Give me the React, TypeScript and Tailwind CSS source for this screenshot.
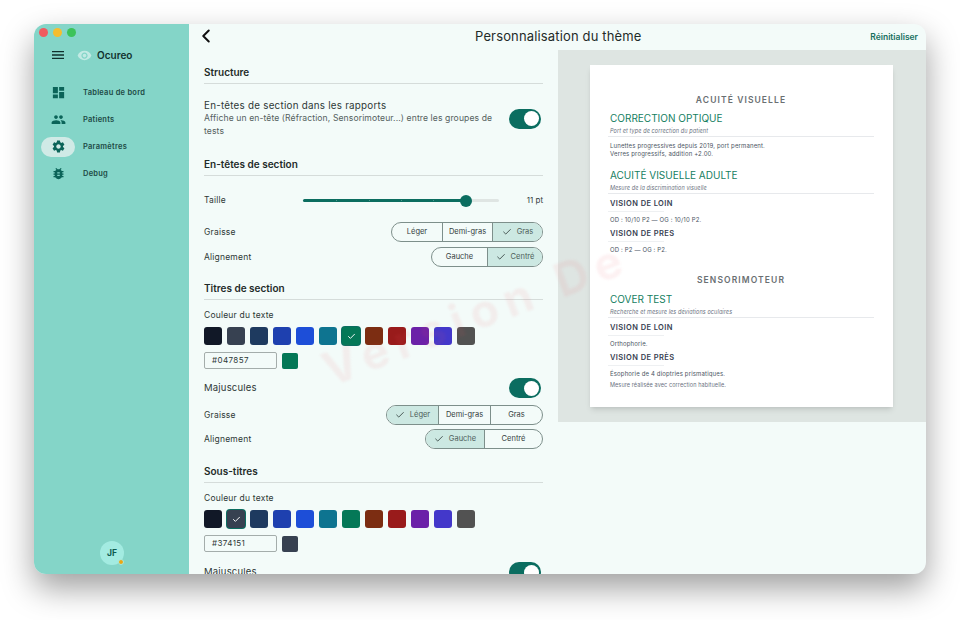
import { Check, ChevronLeft } from "lucide-react";
import { MdBugReport, MdDashboard, MdMenu, MdPeople, MdSettings, MdVisibility } from "react-icons/md";

const swatches = ["#111827", "#374151", "#1e3a5f", "#1e40af", "#1d4ed8", "#0e7490", "#047857", "#7c2d12", "#991b1b", "#6b21a8", "#4338ca", "#525252"];

const navItems = [
  { label: "Tableau de bord", icon: MdDashboard },
  { label: "Patients", icon: MdPeople },
  { label: "Paramètres", icon: MdSettings, active: true },
  { label: "Debug", icon: MdBugReport },
];

function Sidebar() {
  return (
    <aside className="w-[155px] shrink-0 bg-[#84d5c8] flex flex-col">
      <div className="flex gap-[5px] pl-[5px] pt-[4px]">
        <span className="w-[9px] h-[9px] rounded-full bg-[#f05a5f]" />
        <span className="w-[9px] h-[9px] rounded-full bg-[#f6bd2f]" />
        <span className="w-[9px] h-[9px] rounded-full bg-[#3cc35a]" />
      </div>
      <div className="flex items-center mt-[8px] h-[20px] pl-[16px]">
        <MdMenu className="text-[#10302c] w-[16px] h-[16px]" />
        <MdVisibility className="text-[#c2eae4] w-[15px] h-[15px] ml-[11px]" />
        <span className="ml-[5px] text-[10px] font-semibold text-[#12332f]">Ocureo</span>
      </div>
      <nav className="mt-[14px] flex flex-col">
        {navItems.map((item) => {
          const Icon = item.icon;
          return (
            <div key={item.label} className="flex items-center h-[27px]">
              <div className={`ml-[7px] w-[34px] h-[20px] rounded-full flex items-center justify-center ${item.active ? "bg-[#d0eae6]" : ""}`}>
                <Icon className="text-[#0b6459] w-[15px] h-[15px]" />
              </div>
              <span className="ml-[8px] text-[7.5px] font-semibold tracking-[0.25px] text-[#1d4a45]">{item.label}</span>
            </div>
          );
        })}
      </nav>
      <div className="mt-auto mb-[9px] self-center relative w-[24px] h-[24px] ml-[1px] rounded-full bg-[#a3ebe1] flex items-center justify-center">
        <span className="text-[8.5px] font-bold text-[#0e5a50]">JF</span>
        <span className="absolute right-0 bottom-0 w-[6px] h-[6px] rounded-full bg-[#eda611] border border-[#a3ebe1]" />
      </div>
    </aside>
  );
}

function SectionTitle({ children, className }: { children: string; className: string }) {
  return (
    <div className={`${className} border-b border-[#d5dcda] pt-[1px] text-[10px] h-[20px] font-semibold text-[#1f2b29]`}>{children}</div>
  );
}

function Toggle() {
  return (
    <span className="w-[32px] h-[20px] rounded-full bg-[#0b6d60] flex items-center justify-end pr-[2px] shrink-0 mr-[2px]">
      <span className="w-[15px] h-[15px] rounded-full bg-white" />
    </span>
  );
}

function Segmented({ options, selected, widths }: { options: string[]; selected: number; widths: string[] }) {
  return (
    <div className="flex h-[20px] rounded-full border border-[#7d8f8b] overflow-hidden">
      {options.map((o, i) => (
        <div
          key={o}
          className={`${widths[i]} flex items-center justify-center text-[7.5px] text-[#33403e] ${i > 0 ? "border-l border-[#7d8f8b]" : ""} ${i === selected ? "bg-[#cce8e2]" : ""}`}
        >
          {i === selected && <Check className="w-[10px] h-[10px] mr-[5px] text-[#1f2b29]" strokeWidth={1.8} />}
          <span className={i === selected ? "text-[#4c5e5a]" : ""}>{o}</span>
        </div>
      ))}
    </div>
  );
}

function Row({ label, className, labelSize, children }: { label: string; className: string; labelSize: string; children: React.ReactNode }) {
  return (
    <div className={`${className} flex items-center justify-between h-[20px]`}>
      <span className={`${labelSize} text-[#2d3836] tracking-[0.2px]`}>{label}</span>
      {children}
    </div>
  );
}

function Swatches({ selected, hex, className }: { selected: number; hex: string; className: string }) {
  return (
    <div className={className}>
      <div className="text-[8.5px] text-[#2d3836] tracking-[0.2px] h-[12px] leading-[12px]">Couleur du texte</div>
      <div className="flex gap-[5px] mt-[6px]">
        {swatches.map((c, i) => (
          <span
            key={c}
            className={`w-[18px] h-[18px] rounded-[3px] flex items-center justify-center ${i === selected ? "ring-1 ring-[#0b6d60]" : ""}`}
            style={{ backgroundColor: c }}
          >
            {i === selected && <Check className="w-[9px] h-[9px] text-white" strokeWidth={2.5} />}
          </span>
        ))}
      </div>
      <div className="flex items-center gap-[5px] mt-[7px]">
        <div className="w-[73px] h-[17px] rounded-[2px] border border-[#a4adab] text-[8px] tracking-[0.4px] text-[#2d3836] pl-[7px] leading-[15px]">{hex}</div>
        <span className="w-[16px] h-[16px] rounded-[2px]" style={{ backgroundColor: swatches[selected] }} />
      </div>
    </div>
  );
}

function SettingsPanel() {
  return (
    <div className="w-[369px] shrink-0 pl-[15px] pr-[15px] overflow-hidden h-full">
      <SectionTitle className="mt-[14px]">Structure</SectionTitle>
      <div className="mt-[15px] flex items-center justify-between">
        <div className="w-[292px]">
          <div className="text-[9.8px] text-[#2d3836] leading-[13px] tracking-[0.25px]">En-têtes de section dans les rapports</div>
          <div className="text-[8.6px] text-[#55615f] leading-[13px] tracking-[0.1px]">Affiche un en-tête (Réfraction, Sensorimoteur...) entre les groupes de tests</div>
        </div>
        <Toggle />
      </div>
      <SectionTitle className="mt-[18px]">En-têtes de section</SectionTitle>
      <Row label="Taille" labelSize="text-[8.5px]" className="mt-[14px]">
        <div className="flex items-center">
          <div className="relative w-[196px] h-[3px] rounded-full bg-[#dfe5e3]">
            <div className="h-full w-[162px] rounded-full bg-[#0b6d60]" />
            <span className="absolute left-[33px] top-[1px] w-[1px] h-[1px] bg-[#4f9a8f]" />
            <span className="absolute left-[66px] top-[1px] w-[1px] h-[1px] bg-[#4f9a8f]" />
            <span className="absolute left-[98px] top-[1px] w-[1px] h-[1px] bg-[#4f9a8f]" />
            <span className="absolute left-[130px] top-[1px] w-[1px] h-[1px] bg-[#4f9a8f]" />
            <span className="absolute left-[157px] top-[-4px] w-[12px] h-[12px] rounded-full bg-[#0b6d60]" />
          </div>
          <span className="w-[44px] text-right text-[8px] text-[#33403e]">11 pt</span>
        </div>
      </Row>
      <Row label="Graisse" labelSize="text-[8.5px]" className="mt-[12px]">
        <Segmented options={["Léger", "Demi-gras", "Gras"]} selected={2} widths={["w-[50px]", "w-[50px]", "w-[50px]"]} />
      </Row>
      <Row label="Alignement" labelSize="text-[8.5px]" className="mt-[5px]">
        <Segmented options={["Gauche", "Centré"]} selected={1} widths={["w-[55px]", "w-[55px]"]} />
      </Row>
      <SectionTitle className="mt-[13px]">Titres de section</SectionTitle>
      <Swatches className="mt-[9px]" selected={6} hex="#047857" />
      <Row label="Majuscules" labelSize="text-[9.5px]" className="mt-[9px]">
        <Toggle />
      </Row>
      <Row label="Graisse" labelSize="text-[8.5px]" className="mt-[7px]">
        <Segmented options={["Léger", "Demi-gras", "Gras"]} selected={0} widths={["w-[51px]", "w-[52px]", "w-[52px]"]} />
      </Row>
      <Row label="Alignement" labelSize="text-[8.5px]" className="mt-[4px]">
        <Segmented options={["Gauche", "Centré"]} selected={0} widths={["w-[58px]", "w-[58px]"]} />
      </Row>
      <SectionTitle className="mt-[14px]">Sous-titres</SectionTitle>
      <Swatches className="mt-[9px]" selected={1} hex="#374151" />
      <Row label="Majuscules" labelSize="text-[9.5px]" className="mt-[10px]">
        <Toggle />
      </Row>
    </div>
  );
}

function GroupTitle({ children, className }: { children: string; className: string }) {
  return <div className={`${className} text-center text-[8.5px] font-semibold tracking-[1.1px] text-[#6a6f72] leading-[12px]`}>{children}</div>;
}

function ReportTitle({ title, sub, className }: { title: string; sub: string; className: string }) {
  return (
    <div className={className}>
      <div className="pl-[2px] text-[10px] text-[#15805f] leading-[13px]">{title}</div>
      <div className="mt-[2px] pl-[2px] text-[5.5px] italic tracking-[0.1px] text-[#6b7280] border-b border-[#e7e9ec] leading-[9px]">{sub}</div>
    </div>
  );
}

function Subtitle({ children, className }: { children: string; className: string }) {
  return (
    <div className={className}>
      <div className="pl-[2px] text-[7.5px] font-semibold tracking-[0.4px] text-[#374151] leading-[11px]">{children}</div>
      <div className="mt-[2px] w-[56px] h-[1px] bg-[#eef0f2]" />
    </div>
  );
}

function Body({ children, className }: { children: React.ReactNode; className: string }) {
  return <div className={`${className} pl-[2px] text-[6px] tracking-[0.15px] text-[#4b5563] leading-[8px]`}>{children}</div>;
}

function Preview() {
  return (
    <div className="flex-1 h-[372px] bg-[#dee5e2] pt-[15px] pl-[32px]">
      <div className="w-[303px] h-[342px] bg-white shadow-md pt-[29px] pl-[18px] pr-[19px]">
        <GroupTitle className="">ACUITÉ VISUELLE</GroupTitle>
        <ReportTitle className="mt-[6px]" title="CORRECTION OPTIQUE" sub="Port et type de correction du patient" />
        <Body className="mt-[5px]">Lunettes progressives depuis 2019, port permanent.<br />Verres progressifs, addition +2.00.</Body>
        <ReportTitle className="mt-[11px]" title="ACUITÉ VISUELLE ADULTE" sub="Mesure de la discrimination visuelle" />
        <Subtitle className="mt-[4px]">VISION DE LOIN</Subtitle>
        <Body className="mt-[4px]">OD : 10/10 P2 — OG : 10/10 P2.</Body>
        <Subtitle className="mt-[4px]">VISION DE PRES</Subtitle>
        <Body className="mt-[4px]">OD : P2 — OG : P2.</Body>
        <GroupTitle className="mt-[20px]">SENSORIMOTEUR</GroupTitle>
        <ReportTitle className="mt-[7px]" title="COVER TEST" sub="Recherche et mesure les déviations oculaires" />
        <Subtitle className="mt-[4px]">VISION DE LOIN</Subtitle>
        <Body className="mt-[4px]">Orthophorie.</Body>
        <Subtitle className="mt-[4px]">VISION DE PRÈS</Subtitle>
        <Body className="mt-[4px]">Ésophorie de 4 dioptries prismatiques.</Body>
        <div className="mt-[3px] pl-[2px] text-[5.5px] tracking-[0.1px] text-[#6b7280] leading-[8px]">Mesure réalisée avec correction habituelle.</div>
      </div>
    </div>
  );
}

export default function App() {
  return (
    <div className="w-[960px] h-[620px] bg-white pt-[24px] pl-[34px] font-['Inter',sans-serif]">
      <div className="relative flex w-[892px] h-[550px] rounded-[12px] overflow-hidden bg-[#f3fbf9] shadow-[0_14px_32px_rgba(0,0,0,0.38)]">
        <Sidebar />
        <main className="flex-1 flex flex-col min-w-0">
          <header className="h-[26px] shrink-0 flex items-center relative">
            <ChevronLeft className="ml-[6px] -mt-[2px] w-[22px] h-[22px] text-[#111]" strokeWidth={2.2} />
            <span className="absolute left-[286px] text-[13px] text-[#1f2b29] tracking-[0.15px]">Personnalisation du thème</span>
            <span className="ml-auto mr-[8px] text-[8.5px] font-semibold text-[#17705f]">Réinitialiser</span>
          </header>
          <div className="flex flex-1 min-h-0">
            <SettingsPanel />
            <Preview />
          </div>
        </main>
        <div className="absolute left-[280px] top-[255px] -rotate-[21deg] text-[46px] font-bold tracking-[8px] text-[#e8505b]/8 blur-[1px] pointer-events-none whitespace-nowrap">Version De</div>
      </div>
    </div>
  );
}
